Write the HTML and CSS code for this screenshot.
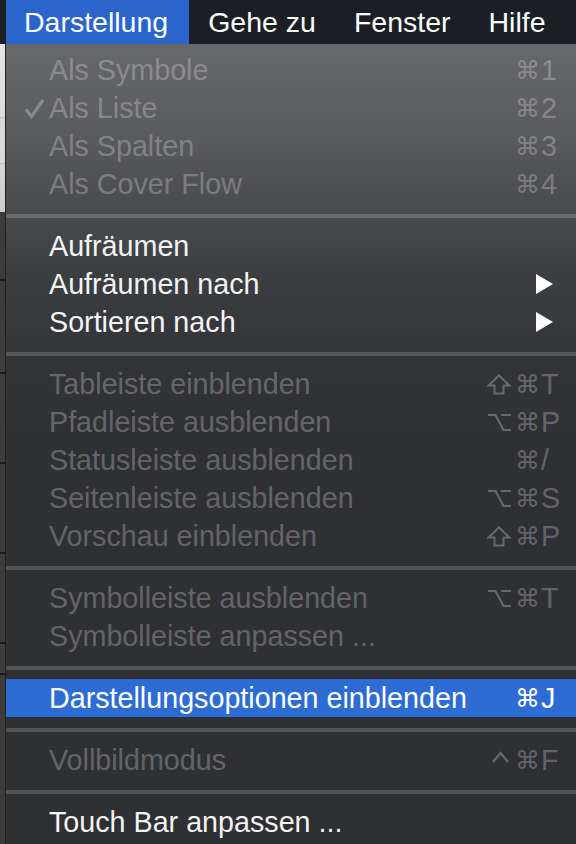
FILE: index.html
```html
<!DOCTYPE html>
<html lang="de">
<head>
<meta charset="UTF-8">
<meta name="viewport" content="width=device-width, initial-scale=1.0">
<title>Darstellung</title>
<link rel="stylesheet" href="styles.css">
</head>
<body>
<div class="screen">
    <nav class="menubar">
        <span class="menu-title active">Darstellung</span>
        <span class="menu-title">Gehe zu</span>
        <span class="menu-title">Fenster</span>
        <span class="menu-title">Hilfe</span>
    </nav>
    <div class="below">
        <!-- window peeking out behind the menu -->
        <div class="backdrop">
            <div class="bd bd-light1"></div>
            <div class="bd-line light"></div>
            <div class="bd bd-light2"></div>
            <div class="bd-line light"></div>
            <div class="bd bd-light3"></div>
            <div class="bd bd-dark" style="height: 67px"></div>
            <div class="bd-line"></div>
            <div class="bd bd-dark" style="height: 91px"></div>
            <div class="bd-line"></div>
            <div class="bd bd-dark" style="height: 88px"></div>
            <div class="bd-line"></div>
            <div class="bd bd-dark" style="height: 88px"></div>
            <div class="bd-line"></div>
            <div class="bd bd-dark" style="height: 88px"></div>
            <div class="bd-line"></div>
            <div class="bd bd-dark" style="height: 29px"></div>
            <div class="bd-line"></div>
            <div class="bd bd-dark bd-rest"></div>
        </div>
        <ul class="menu">
            <li class="item off"><span class="mark"></span><span class="label">Als Symbole</span><span class="keys"><span class="cmd">⌘</span><span class="key">1</span></span></li>
            <li class="item off">
                <span class="mark"><svg width="21" height="21" viewBox="0 0 21 21"><polyline points="2,11.5 7.5,18.5 19,2" fill="none" stroke="currentColor" stroke-width="3.2"/></svg></span>
                <span class="label">Als Liste</span><span class="keys"><span class="cmd">⌘</span><span class="key">2</span></span>
            </li>
            <li class="item off"><span class="mark"></span><span class="label">Als Spalten</span><span class="keys"><span class="cmd">⌘</span><span class="key">3</span></span></li>
            <li class="item off"><span class="mark"></span><span class="label">Als Cover Flow</span><span class="keys"><span class="cmd">⌘</span><span class="key">4</span></span></li>
            <li class="sep"></li>
            <li class="item"><span class="mark"></span><span class="label">Aufräumen</span></li>
            <li class="item"><span class="mark"></span><span class="label">Aufräumen nach</span><svg class="arrow" width="17" height="20" viewBox="0 0 17 20"><polygon points="0,0 17,10 0,20" fill="#fff"/></svg></li>
            <li class="item"><span class="mark"></span><span class="label">Sortieren nach</span><svg class="arrow" width="17" height="20" viewBox="0 0 17 20"><polygon points="0,0 17,10 0,20" fill="#fff"/></svg></li>
            <li class="sep"></li>
            <li class="item off"><span class="mark"></span><span class="label">Tableiste einblenden</span><span class="keys"><svg class="mod" width="24" height="21" viewBox="0 0 24 21"><path d="M12 1.5 L22.5 11.5 H16.5 V19.5 H7.5 V11.5 H1.5 Z" fill="none" stroke="currentColor" stroke-width="2"/></svg><span class="cmd">⌘</span><span class="key">T</span></span></li>
            <li class="item off"><span class="mark"></span><span class="label">Pfadleiste ausblenden</span><span class="keys"><svg class="mod" width="24" height="21" viewBox="0 0 24 21"><path d="M1 3 H8.5 L16.5 18 H24 M14 3 H24" fill="none" stroke="currentColor" stroke-width="2.2"/></svg><span class="cmd">⌘</span><span class="key">P</span></span></li>
            <li class="item off"><span class="mark"></span><span class="label">Statusleiste ausblenden</span><span class="keys"><span class="cmd">⌘</span><span class="key">/</span></span></li>
            <li class="item off"><span class="mark"></span><span class="label">Seitenleiste ausblenden</span><span class="keys"><svg class="mod" width="24" height="21" viewBox="0 0 24 21"><path d="M1 3 H8.5 L16.5 18 H24 M14 3 H24" fill="none" stroke="currentColor" stroke-width="2.2"/></svg><span class="cmd">⌘</span><span class="key">S</span></span></li>
            <li class="item off"><span class="mark"></span><span class="label">Vorschau einblenden</span><span class="keys"><svg class="mod" width="24" height="21" viewBox="0 0 24 21"><path d="M12 1.5 L22.5 11.5 H16.5 V19.5 H7.5 V11.5 H1.5 Z" fill="none" stroke="currentColor" stroke-width="2"/></svg><span class="cmd">⌘</span><span class="key">P</span></span></li>
            <li class="sep"></li>
            <li class="item off"><span class="mark"></span><span class="label">Symbolleiste ausblenden</span><span class="keys"><svg class="mod" width="24" height="21" viewBox="0 0 24 21"><path d="M1 3 H8.5 L16.5 18 H24 M14 3 H24" fill="none" stroke="currentColor" stroke-width="2.2"/></svg><span class="cmd">⌘</span><span class="key">T</span></span></li>
            <li class="item off"><span class="mark"></span><span class="label">Symbolleiste anpassen ...</span></li>
            <li class="sep"></li>
            <li class="item current"><span class="mark"></span><span class="label">Darstellungsoptionen einblenden</span><span class="keys"><span class="cmd">⌘</span><span class="key">J</span></span></li>
            <li class="sep"></li>
            <li class="item off"><span class="mark"></span><span class="label">Vollbildmodus</span><span class="keys"><svg class="mod" width="24" height="21" viewBox="0 0 24 21"><path d="M6 12 L13.5 3 L21 12" fill="none" stroke="currentColor" stroke-width="2.2"/></svg><span class="cmd">⌘</span><span class="key">F</span></span></li>
            <li class="sep"></li>
            <li class="item"><span class="mark"></span><span class="label">Touch Bar anpassen ...</span></li>
        </ul>
    </div>
</div>
</body>
</html>
```

FILE: styles.css
```css
body {
    margin: 0;
    padding: 0;
    background-color: #2e3034;
    font-family: "Liberation Sans", Arial, sans-serif;
}
.screen {
    width: 576px;
    height: 844px;
    overflow: hidden;
}
.menubar {
    display: flex;
    height: 44px;
    padding-left: 6px;
    background-color: #1b1e25;
}
.menu-title {
    padding: 0 19px;
    font-size: 28.5px;
    line-height: 44px;
    color: #fff;
    white-space: nowrap;
}
.menu-title.active {
    padding: 0 21px 0 18px;
    background-color: #2b65cb;
}
.below {
    display: flex;
    height: 800px;
}
.backdrop {
    width: 5px;
    display: flex;
    flex-direction: column;
    border-right: 1px solid #1f2024;
}
.bd-light1 {
    height: 73px;
    background: linear-gradient(#e4e4e4, #dcdcdc);
}
.bd-light2 {
    height: 45px;
    background-color: #d9d9d9;
}
.bd-light3 {
    height: 48px;
    background: linear-gradient(#d6d6d6, #cdcdcd);
}
.bd-line {
    height: 2px;
    background-color: #1a1a1a;
}
.bd-line.light {
    height: 1px;
    background-color: #c2c2c2;
}
.bd-dark {
    background-color: #3c3c3c;
}
.bd-rest {
    flex: 1;
}
.menu {
    flex: 1;
    list-style: none;
    margin: 0;
    padding: 7px 0 0 0;
    background: linear-gradient(#67686c 0, #5c5d61 80px, #4a4c50 160px, #3c3e42 230px, #323438 310px, #2e3034 420px, #2e3034 100%);
}
.item {
    display: flex;
    align-items: center;
    height: 38px;
    padding: 0 17px 0 12px;
    font-size: 28.7px;
    color: #f4f4f4;
    white-space: nowrap;
}
.item.off {
    color: rgba(255, 255, 255, 0.27);
}
.item.current {
    background-color: #2e6cd5;
    color: #fff;
}
.mark {
    display: flex;
    align-items: center;
    width: 31px;
    height: 38px;
}
.mark svg {
    margin-left: 6px;
}
.label {
    flex: 1;
}
.keys {
    display: flex;
    align-items: center;
}
.cmd {
    width: 26px;
    font-family: "DejaVu Sans", sans-serif;
    font-size: 25px;
}
.mod {
    margin-right: 4px;
}
.key {
    width: 18px;
}
.arrow {
    margin-right: 6px;
}
.sep {
    height: 4px;
    margin: 11px 0 9px 0;
    background-color: rgba(255, 255, 255, 0.18);
}
```
